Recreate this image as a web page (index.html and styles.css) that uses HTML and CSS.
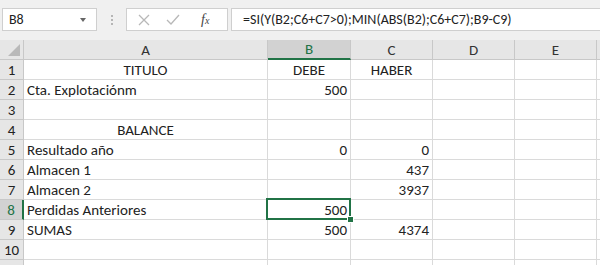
FILE: index.html
```html
<!doctype html>
<html lang="es">
    <head>
        <meta charset="UTF-8" />
        <title>Balance</title>
        <link rel="stylesheet" href="styles.css">
    </head>
    <body>
        <div class="formula-bar">
            <div class="name-box">
                <span>B8</span>
                <span class="caret"></span>
            </div>
            <div class="grip"><i></i><i></i><i></i></div>
            <div class="fx-buttons">
                <svg width="14" height="14" viewBox="0 0 14 14"><path d="M2 2 L12 12 M12 2 L2 12" stroke="#b8b8b8" stroke-width="1.3" fill="none"/></svg>
                <svg width="16" height="14" viewBox="0 0 16 14"><path d="M2 7 L6 11 L14 2" stroke="#b8b8b8" stroke-width="1.3" fill="none"/></svg>
                <span class="fx"><i>f</i><small>x</small></span>
            </div>
            <div class="formula">=SI(Y(B2;C6+C7&gt;0);MIN(ABS(B2);C6+C7);B9-C9)</div>
        </div>

        <div class="sheet">
            <div class="corner"><span></span></div>
            <div class="col-head">A</div>
            <div class="col-head active">B</div>
            <div class="col-head">C</div>
            <div class="col-head">D</div>
            <div class="col-head">E</div>
            <div class="col-head last"></div>
        </div>
        <div class="sheet" id="rows"></div>

        <script>
            var rows = [
                ["TITULO", "DEBE", "HABER", "c"],
                ["Cta. Explotaciónm", "500", ""],
                ["", "", ""],
                ["BALANCE", "", "", "c"],
                ["Resultado año", "0", "0"],
                ["Almacen 1", "", "437"],
                ["Almacen 2", "", "3937"],
                ["Perdidas Anteriores", "500", ""],
                ["SUMAS", "500", "4374"],
                ["", "", ""],
                ["", "", ""]
            ];
            var sheet = document.getElementById("rows");
            var html = "";
            rows.forEach(function (r, i) {
                var n = i + 1;
                var centered = r[3] == "c";
                html += '<div class="row-head' + (n == 8 ? " active" : "") + '">' + n + "</div>";
                html += '<div class="cell' + (centered ? " center" : "") + '">' + r[0] + "</div>";
                html += '<div class="cell ' + (centered ? "center" : "num") + (n == 8 ? " selected" : "") + '">' + r[1] + "</div>";
                html += '<div class="cell ' + (centered ? "center" : "num") + '">' + r[2] + "</div>";
                html += '<div class="cell"></div><div class="cell"></div><div class="cell last"></div>';
            });
            sheet.innerHTML = html;
        </script>
    </body>
</html>
```
FILE: styles.css
```css
body {
    margin: 0;
    background-color: #fff;
    font-family: Carlito, Lato, sans-serif;
    font-size: 15px;
    color: #222;
    overflow: hidden;
}
.formula-bar {
    height: 40px;
    background-color: #f0f0f0;
    display: flex;
    align-items: flex-start;
    padding-top: 8px;
    box-sizing: border-box;
    padding-left: 2px;
}
.name-box {
    width: 95px;
    height: 23px;
    background-color: #fff;
    border: 1px solid #cfcfcf;
    box-sizing: border-box;
    display: flex;
    align-items: center;
    justify-content: space-between;
    padding: 0 10px 0 6px;
    font-size: 14px;
}
.caret {
    width: 0;
    height: 0;
    border-left: 3px solid transparent;
    border-right: 3px solid transparent;
    border-top: 4px solid #666;
}
.grip {
    width: 29px;
    height: 23px;
    display: flex;
    flex-direction: column;
    align-items: center;
    justify-content: center;
    gap: 2px;
}
.grip i {
    width: 2px;
    height: 2px;
    background-color: #b5b5b5;
}
.fx-buttons {
    width: 102px;
    height: 23px;
    background-color: #fff;
    border: 1px solid #cfcfcf;
    box-sizing: border-box;
    display: flex;
    align-items: center;
    padding-left: 10px;
    gap: 14px;
}
.fx {
    margin-left: 6px;
    font-family: "Liberation Serif", serif;
    font-size: 14px;
    color: #444;
}
.fx small {
    font-size: 10px;
    font-style: italic;
}
.formula {
    flex: 1;
    height: 23px;
    margin-left: 3px;
    background-color: #fff;
    border: 1px solid #cfcfcf;
    border-right: none;
    box-sizing: border-box;
    padding-left: 11px;
    line-height: 21px;
    font-size: 14px;
}
.sheet {
    display: grid;
    grid-template-columns: 24px 244px 83px 82px 82px 82px 3px;
    grid-auto-rows: 20px;
}
.corner {
    background-color: #e6e6e6;
    border-right: 1px solid #c8c8c8;
    border-bottom: 1px solid #c8c8c8;
    position: relative;
}
.corner span {
    position: absolute;
    right: 3px;
    bottom: 3px;
    width: 0;
    height: 0;
    border-left: 12px solid transparent;
    border-bottom: 12px solid #b9b9b9;
}
.col-head {
    background-color: #e6e6e6;
    border-right: 1px solid #c8c8c8;
    border-bottom: 1px solid #c8c8c8;
    text-align: center;
    line-height: 20px;
    color: #333;
}
.col-head.active {
    background-color: #d2d2d2;
    border-bottom: 2px solid #217346;
    color: #217346;
    line-height: 19px;
}
.col-head.last,
.cell.last {
    border-right: none;
}
.row-head {
    background-color: #e6e6e6;
    border-right: 1px solid #c8c8c8;
    border-bottom: 1px solid #c8c8c8;
    text-align: center;
    line-height: 21px;
    color: #222;
}
.row-head.active {
    background-color: #d2d2d2;
    border-right: 2px solid #217346;
    color: #217346;
}
.cell {
    border-right: 1px solid #dadada;
    border-bottom: 1px solid #dadada;
    line-height: 21px;
    padding: 0 3px;
    white-space: nowrap;
}
.cell.center {
    text-align: center;
}
.cell.num {
    text-align: right;
}
.cell.selected {
    position: relative;
}
.cell.selected::after {
    content: "";
    position: absolute;
    left: -2px;
    top: -2px;
    right: -1px;
    bottom: -1px;
    border: 2px solid #217346;
}
.cell.selected::before {
    content: "";
    position: absolute;
    right: -4px;
    bottom: -4px;
    width: 5px;
    height: 5px;
    background-color: #217346;
    border: 1px solid #fff;
    z-index: 1;
}
```
